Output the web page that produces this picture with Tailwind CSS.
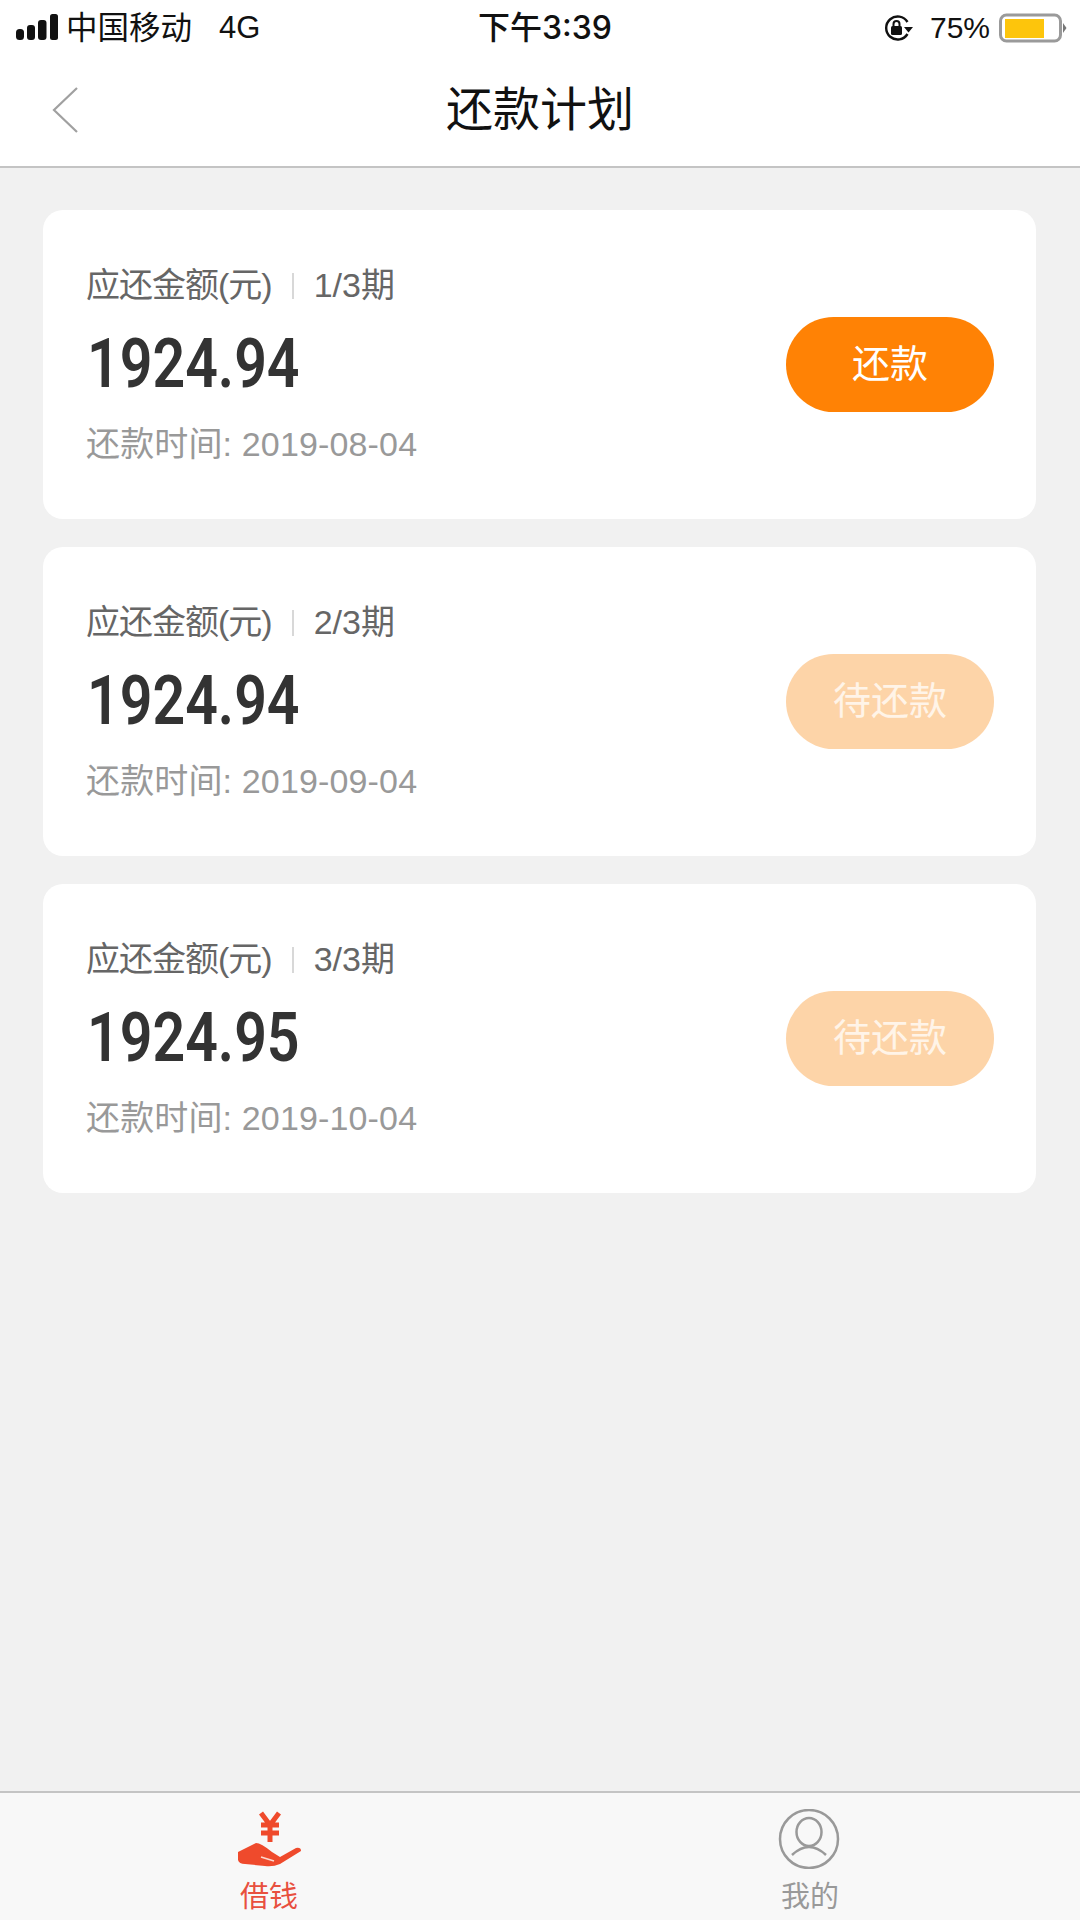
<!DOCTYPE html>
<html lang="zh-CN">
<head>
<meta charset="utf-8">
<script src="https://cdn.jsdelivr.net/npm/@tailwindcss/browser@4"></script>
</head>
<body class="m-0">
<div class="w-[1080px] h-[1920px] flex flex-col bg-[#f1f1f1] font-['Liberation_Sans','Noto_Sans_CJK_SC',sans-serif] overflow-hidden">
  <!-- status bar -->
  <div class="h-[54px] bg-white relative flex items-center justify-between pt-[2px] pl-[15px] pr-[13px] text-[31px] leading-[52px] text-[#111]">
    <div class="flex items-center">
      <svg class="w-[44px] h-[28px]" viewBox="0 0 44 28" fill="#111">
        <rect x="1" y="15" width="8" height="11" rx="3.5"/>
        <rect x="12" y="11" width="8" height="15" rx="3"/>
        <rect x="23" y="6" width="8.5" height="20" rx="3"/>
        <rect x="35" y="0" width="8" height="26" rx="2.5"/>
      </svg>
      <span class="ml-[7px] text-[31.5px]">中国移动</span>
      <span class="ml-[27px]">4G</span>
    </div>
    <span class="absolute left-[478px] top-[2px] font-['Inter','Noto_Sans_CJK_SC',sans-serif] font-medium text-[32px]">下午3:39</span>
    <div class="flex items-center">
      <svg class="w-[31px] h-[26px]" viewBox="0 0 31 26" fill="none">
        <path d="M24.5 19 A11.5 11.5 0 1 1 24.5 7" stroke="#111" stroke-width="2.4"/>
        <path d="M21 12h9l-4.500 5.500z" fill="#111"/>
        <rect x="8" y="11" width="11" height="9" rx="1.500" fill="#111"/>
        <path d="M10.500 11V9a3 3 0 0 1 6 0v2" stroke="#111" stroke-width="2"/>
      </svg>
      <span class="ml-[16px] text-[30px]">75%</span>
      <svg class="ml-[9px] w-[68px] h-[30px]" viewBox="0 0 68 30" fill="none">
        <rect x="1.500" y="2" width="60" height="26" rx="6" stroke="#9a9a9a" stroke-width="3"/>
        <rect x="6" y="6" width="39" height="19" fill="#fdc50c"/>
        <path d="M64 10l3.500 5-3.500 5z" fill="#777"/>
      </svg>
    </div>
  </div>
  <!-- nav bar -->
  <div class="h-[114px] bg-white border-b-2 border-[#c4c4c4] relative flex items-center justify-center pb-[1px]">
    <svg class="absolute left-[50px] top-[30px] w-[30px] h-[50px]" viewBox="0 0 30 50" fill="none">
      <path d="M27 4 L4 26 L27 48" stroke="#a0a0a0" stroke-width="2.2"/>
    </svg>
    <span class="text-[47px] leading-[60px] text-[#111]">还款计划</span>
  </div>
  <!-- list -->
  <div class="flex-1 flex flex-col gap-[28px] pt-[42px] pl-[43px] pr-[44px]">
    <div class="h-[309px] bg-white rounded-[20px] pl-[43px] pr-[42px] flex items-center justify-between">
      <div class="flex flex-col">
        <div class="flex items-center h-[44px] text-[34px] text-[#666]">
          <span class="tracking-[-1px]">应还金额(元)</span>
          <span class="w-[2px] h-[26px] bg-[#d8d8d8] ml-[20px] mr-[20px]"></span>
          <span>1/3期</span>
        </div>
        <div class="mt-[20px] h-[72px] leading-[72px] text-[69px] font-semibold origin-left scale-x-[0.83] translate-x-[1px] text-[#333] font-['Roboto',sans-serif]">1924.94</div>
        <div class="mt-[22px] h-[44px] leading-[44px] text-[34px] tracking-[0.15px] text-[#999]">还款时间: 2019-08-04</div>
      </div>
      <div class="w-[208px] h-[95px] rounded-full bg-[#ff8205] text-white text-[38px] flex items-center justify-center">还款</div>
    </div>
    <div class="h-[309px] bg-white rounded-[20px] pl-[43px] pr-[42px] flex items-center justify-between">
      <div class="flex flex-col">
        <div class="flex items-center h-[44px] text-[34px] text-[#666]">
          <span class="tracking-[-1px]">应还金额(元)</span>
          <span class="w-[2px] h-[26px] bg-[#d8d8d8] ml-[20px] mr-[20px]"></span>
          <span>2/3期</span>
        </div>
        <div class="mt-[20px] h-[72px] leading-[72px] text-[69px] font-semibold origin-left scale-x-[0.83] translate-x-[1px] text-[#333] font-['Roboto',sans-serif]">1924.94</div>
        <div class="mt-[22px] h-[44px] leading-[44px] text-[34px] tracking-[0.15px] text-[#999]">还款时间: 2019-09-04</div>
      </div>
      <div class="w-[208px] h-[95px] rounded-full bg-[#fdd4a8] text-[#fff4e8] text-[38px] flex items-center justify-center">待还款</div>
    </div>
    <div class="h-[309px] bg-white rounded-[20px] pl-[43px] pr-[42px] flex items-center justify-between">
      <div class="flex flex-col">
        <div class="flex items-center h-[44px] text-[34px] text-[#666]">
          <span class="tracking-[-1px]">应还金额(元)</span>
          <span class="w-[2px] h-[26px] bg-[#d8d8d8] ml-[20px] mr-[20px]"></span>
          <span>3/3期</span>
        </div>
        <div class="mt-[20px] h-[72px] leading-[72px] text-[69px] font-semibold origin-left scale-x-[0.83] translate-x-[1px] text-[#333] font-['Roboto',sans-serif]">1924.95</div>
        <div class="mt-[22px] h-[44px] leading-[44px] text-[34px] tracking-[0.15px] text-[#999]">还款时间: 2019-10-04</div>
      </div>
      <div class="w-[208px] h-[95px] rounded-full bg-[#fdd4a8] text-[#fff4e8] text-[38px] flex items-center justify-center">待还款</div>
    </div>
  </div>
  <!-- tab bar -->
  <div class="h-[129px] bg-[#f8f8f8] border-t-2 border-[#c4c4c4] flex pt-[16px]">
    <div class="flex-1 flex flex-col items-center">
      <svg class="w-[90px] h-[60px]" viewBox="0 -1 90 60" fill="none">
        <path d="M36 3 L45 15 L54 3 M45 15 V32 M36 15 H54 M36 23 H54" stroke="#ef4a2c" stroke-width="5"/>
        <path d="M13 42 L31 33 Q36 33 47 42 L55 47 L71 38 Q76 37 76 41 L55 54 Q48 57 40 56 L20 54 Q14 54 13 50 Z" fill="#ef4a2c"/>
        <path d="M36 47 L49 51" stroke="#fbd8ce" stroke-width="1.600"/>
      </svg>
      <span class="mt-[10px] text-[29px] leading-[36px] text-[#e8503f] -translate-x-[1px]">借钱</span>
    </div>
    <div class="flex-1 flex flex-col items-center">
      <svg class="w-[90px] h-[60px]" viewBox="0 0 90 60" fill="none" stroke="#999" stroke-width="2.500">
        <circle cx="44" cy="30" r="29"/>
        <ellipse cx="44" cy="23" rx="12.500" ry="14"/>
        <path d="M27 46 Q44 30 61 46"/>
      </svg>
      <span class="mt-[10px] text-[29px] leading-[36px] text-[#999]">我的</span>
    </div>
  </div>
</div>
</body>
</html>
